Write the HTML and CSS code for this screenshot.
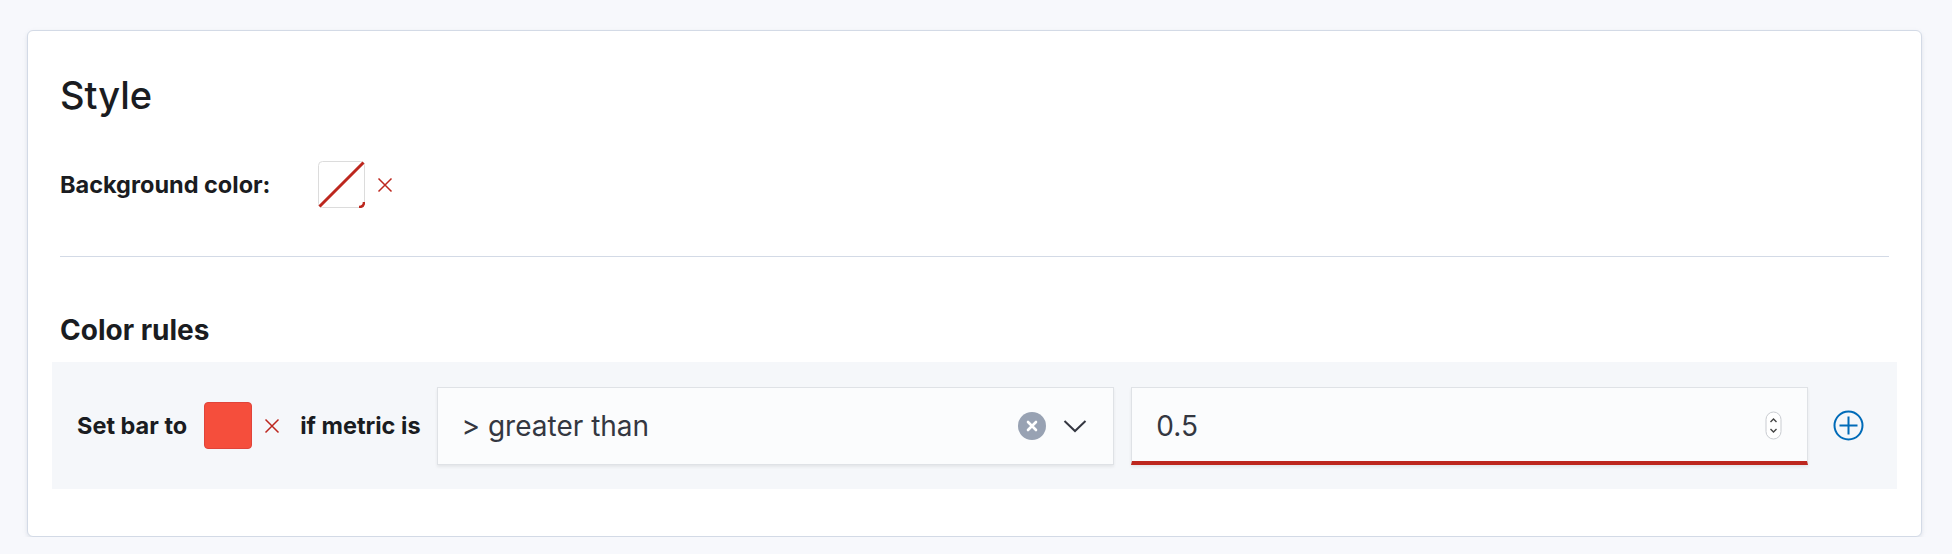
FILE: index.html
```html
<!DOCTYPE html>
<html lang="en">
<head>
<meta charset="utf-8">
<title>Style</title>
<link rel="stylesheet" href="styles.css">
</head>
<body>
<main class="page">
  <section class="card">
    <h2 class="card-title">Style</h2>
    <div class="bg-row">
      <span class="form-label">Background color:</span>
      <span class="swatch swatch-empty">
        <svg width="47" height="47" viewBox="0 0 47 47">
          <rect x="0.5" y="0.5" width="46" height="46" rx="4" fill="#fff" stroke="#dcdcdc"/>
          <line x1="1.5" y1="45.5" x2="45.5" y2="1.5" stroke="#bd271e" stroke-width="3"/>
          <path d="M46 41 Q46 46 41 46" fill="none" stroke="#bd271e" stroke-width="2.5"/>
        </svg>
      </span>
      <span class="clear-x">
        <svg width="16" height="16" viewBox="0 0 16 16"><path d="M1.5 1.5 L14.5 14.5 M14.5 1.5 L1.5 14.5" stroke="#bd271e" stroke-width="1.5" fill="none"/></svg>
      </span>
    </div>
    <hr class="divider">
    <h3 class="section-title">Color rules</h3>
    <div class="rule-row">
      <span class="rule-label">Set bar to</span>
      <span class="swatch swatch-red"></span>
      <span class="clear-x small-x">
        <svg width="16" height="16" viewBox="0 0 16 16"><path d="M1.5 1.5 L14.5 14.5 M14.5 1.5 L1.5 14.5" stroke="#bd271e" stroke-width="1.5" fill="none"/></svg>
      </span>
      <span class="rule-label if-label">if metric is</span>
      <div class="field select-field">
        <span class="field-text">&gt; greater than</span>
        <span class="select-icons">
          <svg class="clear-circle" width="28" height="28" viewBox="0 0 28 28">
            <circle cx="14" cy="14" r="14" fill="#98a2b3"/>
            <path d="M10 10 L18 18 M18 10 L10 18" stroke="#fff" stroke-width="2.6" stroke-linecap="round"/>
          </svg>
          <svg class="chevron" width="24" height="14" viewBox="0 0 24 14">
            <path d="M1.5 2 L12 12 L22.5 2" fill="none" stroke="#343741" stroke-width="2"/>
          </svg>
        </span>
      </div>
      <div class="field number-field">
        <span class="field-text">0.5</span>
        <span class="spinner">
          <svg width="17" height="29" viewBox="0 0 17 29">
            <rect x="1" y="1" width="15" height="27" rx="7.5" fill="#fff" stroke="#c9ccd1"/>
            <path d="M5.5 11 L8.5 8 L11.5 11" fill="none" stroke="#444" stroke-width="1.4"/>
            <path d="M5.5 18 L8.5 21 L11.5 18" fill="none" stroke="#444" stroke-width="1.4"/>
          </svg>
        </span>
      </div>
      <span class="add-btn">
        <svg width="31" height="31" viewBox="0 0 31 31">
          <circle cx="15.5" cy="15.5" r="14" fill="none" stroke="#006bb8" stroke-width="2"/>
          <path d="M15.5 6.5 V24.5 M6.5 15.5 H24.5" stroke="#006bb8" stroke-width="2"/>
        </svg>
      </span>
    </div>
  </section>
</main>
</body>
</html>
```

FILE: styles.css
```css
html, body {
  margin: 0;
  padding: 0;
}
body {
  background: #f7f8fc;
  font-family: Inter, "Noto Sans", "Liberation Sans", sans-serif;
  color: #1a1c21;
}
.page {
  padding: 30px 30px 0 27px;
}
.card {
  background: #fff;
  border: 1px solid #d3dae6;
  border-radius: 6px;
  box-shadow: 0 2px 4px rgba(152, 162, 179, 0.25);
  padding: 40px 32px 47px 32px;
}
.card-title {
  margin: 0;
  font-size: 38px;
  line-height: 48px;
  font-weight: 500;
  color: #1a1c21;
}
.bg-row {
  display: flex;
  align-items: center;
  height: 47px;
  margin-top: 42px;
}
.form-label {
  font-size: 23.5px;
  font-weight: 700;
  color: #1a1c21;
  width: 258px;
}
.swatch {
  display: block;
  flex: none;
}
.swatch svg {
  display: block;
}
.clear-x {
  display: flex;
  margin-left: 12px;
}
.divider {
  border: 0;
  border-top: 1px solid #d3dae6;
  margin: 48px 0 0 0;
  height: 0;
}
.section-title {
  margin: 56px 0 0 0;
  font-size: 28px;
  line-height: 34px;
  font-weight: 700;
  color: #1a1c21;
}
.rule-row {
  margin: 15px -8px 0 -8px;
  height: 127px;
  background: #f5f7fa;
  display: flex;
  align-items: center;
  padding: 0 33px 0 25px;
}
.rule-label {
  font-size: 23.5px;
  font-weight: 700;
  color: #1a1c21;
  white-space: nowrap;
}
.swatch-red {
  width: 46px;
  height: 45px;
  background: #f54e3c;
  border: 1px solid #e0443a;
  border-radius: 4px;
  margin-left: 17px;
}
.small-x {
  margin-left: 12px;
}
.if-label {
  margin-left: 20px;
}
.field {
  flex: 1;
  height: 78px;
  box-sizing: border-box;
  background: #fbfcfd;
  border: 1px solid #dfe2e6;
  box-shadow: 0 2px 3px rgba(0, 0, 0, 0.07);
  display: flex;
  align-items: center;
  padding: 0 24px;
}
.select-field {
  margin-left: 16px;
  padding-right: 26px;
}
.number-field {
  margin-left: 17px;
  border-bottom: 4px solid #bd271e;
  padding-right: 25px;
  padding-top: 3px;
}
.field-text {
  flex: 1;
  font-size: 28px;
  color: #343741;
  white-space: nowrap;
}
.select-icons {
  display: flex;
  align-items: center;
  gap: 17px;
}
.select-icons svg,
.spinner svg,
.add-btn svg,
.clear-x svg {
  display: block;
}
.spinner {
  display: flex;
}
.add-btn {
  display: flex;
  margin-left: 25px;
}
```
